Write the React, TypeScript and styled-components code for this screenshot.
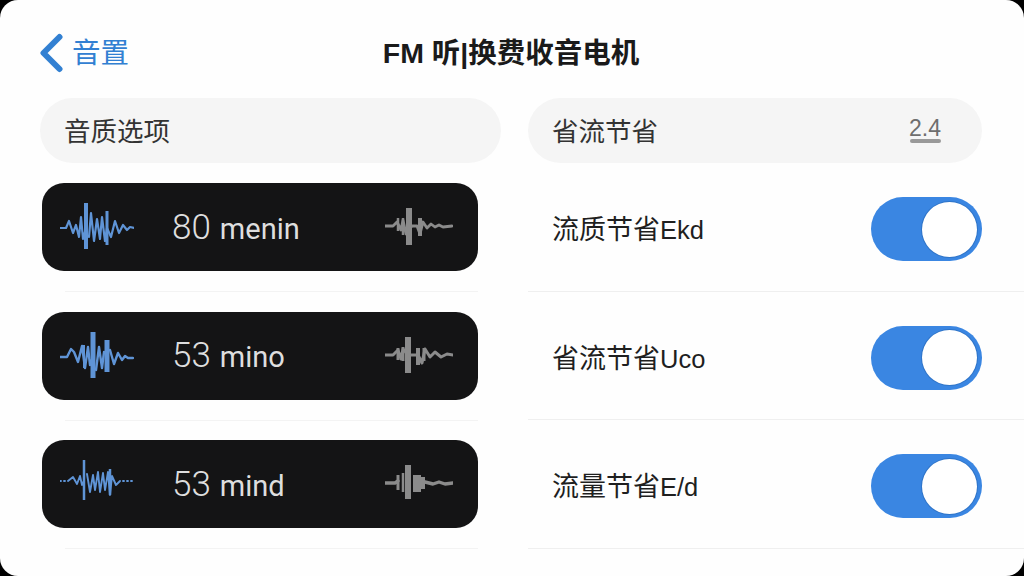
import React from "react";
import styled, { createGlobalStyle } from "styled-components";

const GlobalStyle = createGlobalStyle`
  html, body {
    margin: 0;
    background: #000;
  }
  * {
    box-sizing: border-box;
  }
`;

const FONT = `"Liberation Sans", "Noto Sans CJK SC", sans-serif`;

const Panel = styled.div`
  width: 1024px;
  height: 576px;
  overflow: hidden;
  background: #fefefe;
  border-radius: 18px;
  font-family: ${FONT};
`;

const Header = styled.header`
  display: grid;
  grid-template-columns: 1fr auto 1fr;
  align-items: center;
  height: 98px;
  padding: 7px 42px 0 40px;
`;

const BackLink = styled.div`
  display: flex;
  align-items: center;
  gap: 9px;
  color: #3280d2;
  font-size: 28.5px;
  line-height: 40px;
`;

const Title = styled.h1`
  margin: 0;
  color: #1a1a1a;
  font-size: 28.5px;
  line-height: 36px;
  font-weight: 700;
  white-space: nowrap;
`;

const Columns = styled.main`
  display: grid;
  grid-template-columns: 461px 496px;
  column-gap: 27px;
  margin-left: 40px;
`;

const Pill = styled.div`
  display: flex;
  align-items: center;
  justify-content: space-between;
  height: 65px;
  padding: 0 41px 3px 24px;
  background: #f5f5f5;
  border-radius: 33px;
  color: #333;
  font-size: 26.5px;
`;

const RightPill = styled(Pill)`
  width: 454px;
`;

const Stat = styled.span`
  display: flex;
  flex-direction: column;
  align-items: center;
  margin-top: 2px;
  color: #6e6e6e;
  font-size: 23px;
  line-height: 22px;
  &::after {
    content: "";
    width: 31px;
    height: 4px;
    border-radius: 2px;
    background: #999;
  }
`;

const TrackRow = styled.div`
  height: 128.5px;
  padding: 20px 23px 0 2px;
  &::after {
    content: "";
    display: block;
    height: 1px;
    margin: 20px 0 0 23px;
    background: #f3f3f3;
  }
`;

const TrackCard = styled.div`
  display: flex;
  align-items: center;
  height: 88px;
  padding: 0 25px 0 18px;
  background: #141415;
  border-radius: 22px;
  color: #dedede;
`;

const TrackLabel = styled.div`
  display: flex;
  align-items: baseline;
  gap: 9px;
  flex: 1;
  margin-left: 38px;
`;

const Duration = styled.span`
  font-family: Roboto, sans-serif;
  font-weight: 300;
  font-size: 35px;
`;

const Unit = styled.span`
  font-family: Roboto, sans-serif;
  font-size: 29px;
`;

const SettingRow = styled.div`
  display: flex;
  align-items: center;
  justify-content: space-between;
  height: 128.5px;
  padding: 5px 42px 0 24px;
  border-bottom: 1px solid #efefef;
`;

const SettingLabel = styled.span`
  margin-top: -3px;
  color: #1f1f1f;
  font-size: 27px;
`;

const SettingCode = styled.span`
  font-size: 25.5px;
`;

const Toggle = styled.span`
  display: flex;
  align-items: center;
  justify-content: flex-end;
  width: 111px;
  height: 64px;
  padding-right: 5px;
  border-radius: 32px;
  background: #3a86e2;
  &::after {
    content: "";
    width: 55px;
    height: 55px;
    border-radius: 50%;
    background: #fff;
    box-shadow: 0 0 0 1px #2f74c8;
  }
`;

const WaveSvg = styled.svg<{ $tone: string }>`
  flex: none;
  color: ${(p) => p.$tone};
  fill: none;
  stroke: currentColor;
  stroke-linejoin: round;
  stroke-linecap: round;
`;

type WaveShape = {
  trace: string;
  bars: [number, number, number, number][];
  traceWidth?: number;
};

// bars are x, top, bottom, stroke width for the tall strokes of each wave form
const BLUE_WAVES: WaveShape[] = [
  {
    trace:
      "M0 25H6L9 18L13 30L16 22L19 34L21 14L23 36L26 25 M29 34L31 10L34 38L37 16L40 36L42 14L45 38L47 25L51 34L55 18L59 30L63 22L67 27L70 24L74 25",
    bars: [[26, 0, 46, 4], [47, 8, 42, 3]],
    traceWidth: 2.2,
  },
  {
    trace:
      "M0 25H7L11 17L14 20L18 30L22 14L25 36L28 15L30 33L33 25 M36 38L39 15L42 36L44 20 M50 18L54 32L58 21L62 28L65 24L68 26H73",
    bars: [[33, 0, 46, 5], [47, 8, 40, 5], [24, 13, 36, 2]],
    traceWidth: 2.4,
  },
  {
    trace:
      "M0 21H1M4 21H5M8 21L13 17L17 24L20 16L22 25L24 21 M27 14L30 32L33 15L35 30L38 12L40 32L43 13L45 30L48 12L50 35L52 16L56 25L60 21 M63 21H64M67 21H68M71 21H72",
    bars: [[24, 0, 40, 2.5], [50, 9, 35, 2.5]],
    traceWidth: 1.9,
  },
];

const GREY_WAVES: WaveShape[] = [
  {
    trace: "M0 18H8L12 14L16 22L18 12L21 26L27 18H32L35 26L38 14L42 20L46 16L50 19L54 17L58 19L67 18",
    bars: [[13, 10, 23, 2.5], [18, 10, 27, 2.5], [24, 0, 37, 6], [35, 10, 28, 4]],
    traceWidth: 2.8,
  },
  {
    trace: "M0 18H8L13 13L16 22L18 12L23 18H33L37 26L40 12L45 20L50 15L56 20L62 17L68 18",
    bars: [[13, 11, 23, 3], [18, 10, 24, 3], [23, 0, 36, 6], [33, 11, 28, 4], [39, 11, 24, 3]],
    traceWidth: 3,
  },
  {
    trace: "M0 18H10L13 16 M40 17L48 19L54 17L60 19L68 18",
    bars: [[13, 10, 25, 3], [18, 8, 27, 2.5], [23, 0, 34, 6], [32, 10, 27, 8], [38, 12, 24, 4]],
    traceWidth: 3.4,
  },
];

function Wave({ shape, tone, w, h }: { shape: WaveShape; tone: string; w: number; h: number }) {
  return (
    <WaveSvg $tone={tone} width={w} height={h} viewBox={`0 0 ${w} ${h}`}>
      <path d={shape.trace} strokeWidth={shape.traceWidth ?? 2.2} />
      {shape.bars.map(([x, top, bottom, sw]) => (
        <line key={`${x}-${top}`} x1={x} y1={top} x2={x} y2={bottom} strokeWidth={sw} strokeLinecap="butt" />
      ))}
    </WaveSvg>
  );
}

const TRACKS = [
  { duration: "80", unit: "menin" },
  { duration: "53", unit: "mino" },
  { duration: "53", unit: "mind" },
];

const SETTINGS = [
  { label: "流质节省", code: "Ekd" },
  { label: "省流节省", code: "Uco" },
  { label: "流量节省", code: "E/d" },
];

export default function App() {
  return (
    <>
      <GlobalStyle />
      <Panel>
        <Header>
          <BackLink>
            <svg width="23" height="40" viewBox="0 0 23 40" fill="none">
              <polyline
                points="19.5,4 3.5,20 19.5,36"
                stroke="#3280d2"
                strokeWidth="6"
                strokeLinecap="round"
                strokeLinejoin="round"
              />
            </svg>
            音置
          </BackLink>
          <Title>FM 听|换费收音电机</Title>
          <span />
        </Header>
        <Columns>
          <section>
            <Pill>音质选项</Pill>
            {TRACKS.map((track, i) => (
              <TrackRow key={track.unit}>
                <TrackCard>
                  <Wave shape={BLUE_WAVES[i]} tone="#5f94d6" w={74} h={48} />
                  <TrackLabel>
                    <Duration>{track.duration}</Duration>
                    <Unit>{track.unit}</Unit>
                  </TrackLabel>
                  <Wave shape={GREY_WAVES[i]} tone="#8b8b8b" w={68} h={38} />
                </TrackCard>
              </TrackRow>
            ))}
          </section>
          <section>
            <RightPill>
              省流节省
              <Stat>2.4</Stat>
            </RightPill>
            {SETTINGS.map(({ label, code }) => (
              <SettingRow key={label}>
                <SettingLabel>
                  {label}
                  <SettingCode>{code}</SettingCode>
                </SettingLabel>
                <Toggle />
              </SettingRow>
            ))}
          </section>
        </Columns>
      </Panel>
    </>
  );
}
